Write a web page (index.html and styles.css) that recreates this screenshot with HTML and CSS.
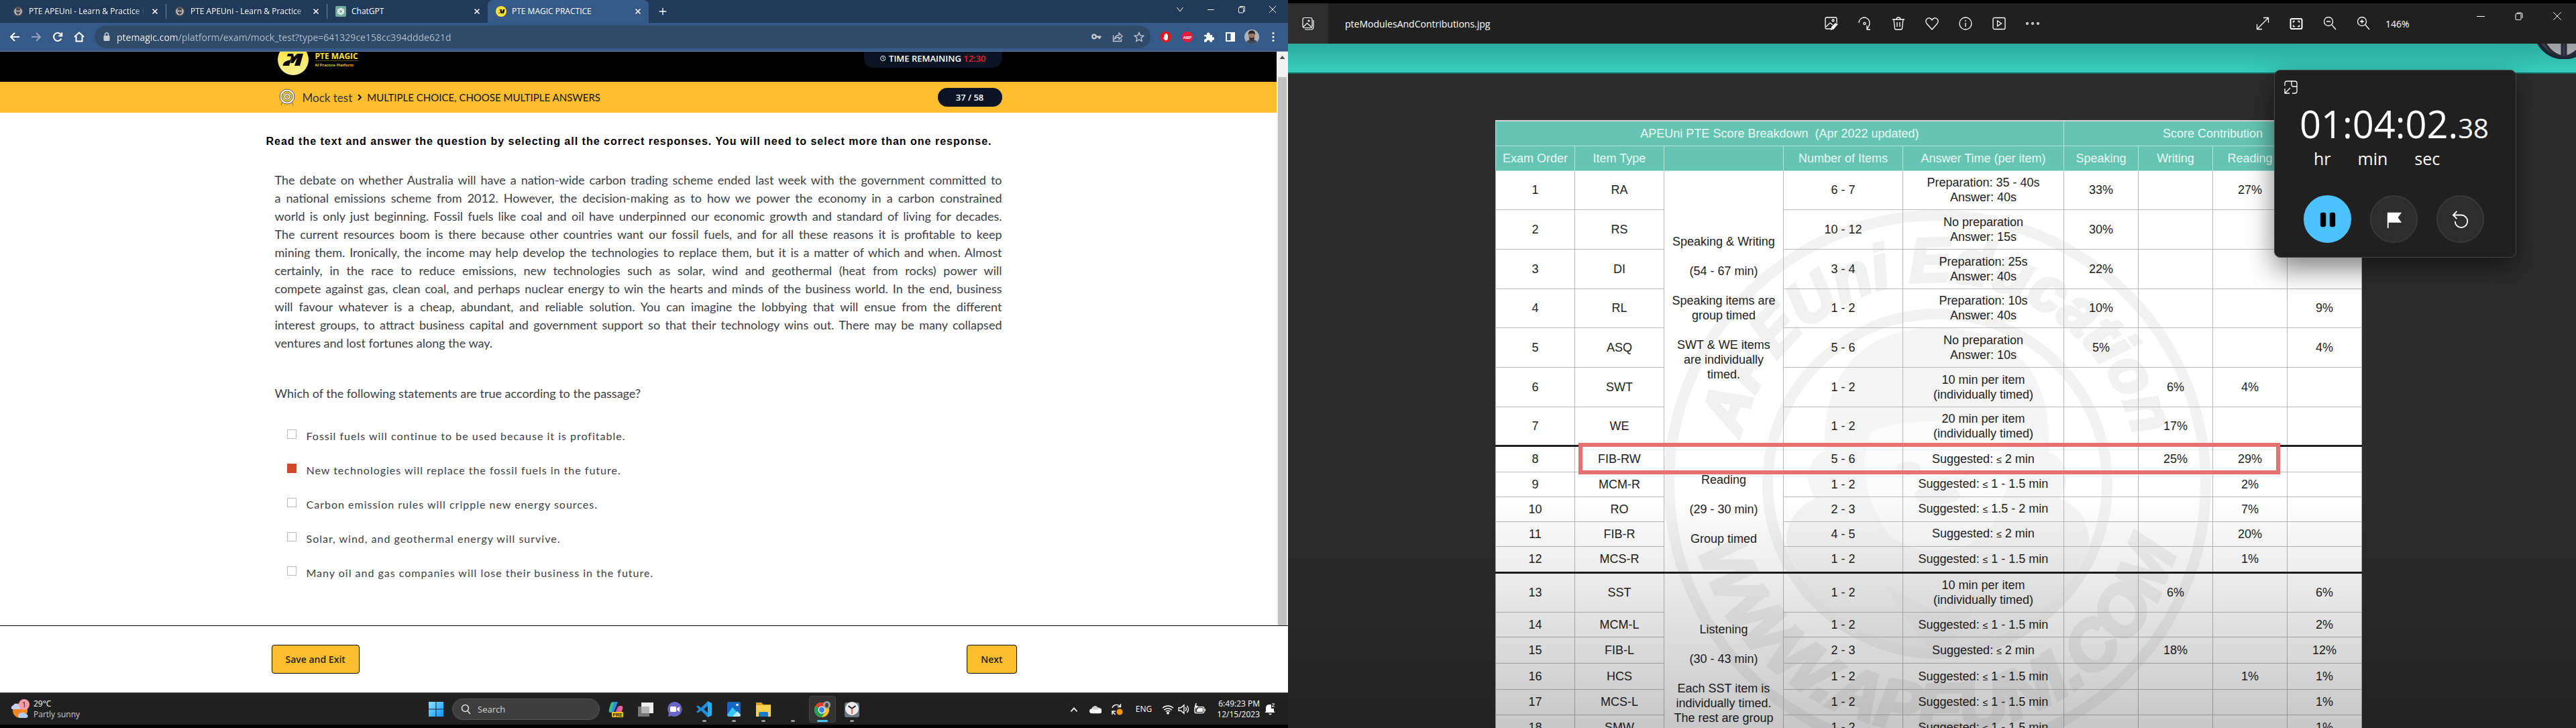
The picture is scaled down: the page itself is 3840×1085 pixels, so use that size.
FILE: index.html
```html
<!DOCTYPE html>
<html lang="en">
<head>
<meta charset="utf-8">
<title>PTE MAGIC PRACTICE</title>
<link rel="stylesheet" href="styles.css">
</head>
<body>
<div class="screen screen-left">
  <header class="tabs">
    <div class="tab">
      <svg class="fav" viewBox="0 0 16 16"><circle cx="8" cy="8" r="7.5" fill="#4a4a50"/><circle cx="8" cy="8" r="5.6" fill="#d5d5d5"/><path d="M4.5 6a3.500 3.500 0 0 1 7 0v4L8 13 4.500 10z" fill="#46464c"/><circle cx="6.500" cy="7.500" r="1" fill="#fff"/><circle cx="9.500" cy="7.500" r="1" fill="#fff"/></svg>
      <span class="tab-title fade">PTE APEUni - Learn &amp; Practice PTE</span>
      <button class="close" aria-label="Close tab"><svg viewBox="0 0 16 16"><path d="M4.500 4.500l7 7m0-7l-7 7"/></svg></button>
    </div>
    <div class="tab divided">
      <svg class="fav" viewBox="0 0 16 16"><circle cx="8" cy="8" r="7.5" fill="#4a4a50"/><circle cx="8" cy="8" r="5.6" fill="#d5d5d5"/><path d="M4.5 6a3.500 3.500 0 0 1 7 0v4L8 13 4.500 10z" fill="#46464c"/><circle cx="6.500" cy="7.500" r="1" fill="#fff"/><circle cx="9.500" cy="7.500" r="1" fill="#fff"/></svg>
      <span class="tab-title fade">PTE APEUni - Learn &amp; Practice PTE</span>
      <button class="close" aria-label="Close tab"><svg viewBox="0 0 16 16"><path d="M4.500 4.500l7 7m0-7l-7 7"/></svg></button>
    </div>
    <div class="tab divided">
      <svg class="fav" viewBox="0 0 16 16"><rect width="16" height="16" rx="2" fill="#74aa9c"/><g fill="none" stroke="#fff"><ellipse cx="8" cy="8" rx="2.400" ry="5"/><ellipse cx="8" cy="8" rx="2.400" ry="5" transform="rotate(60 8 8)"/><ellipse cx="8" cy="8" rx="2.400" ry="5" transform="rotate(120 8 8)"/></g></svg>
      <span class="tab-title">ChatGPT</span>
      <button class="close" aria-label="Close tab"><svg viewBox="0 0 16 16"><path d="M4.500 4.500l7 7m0-7l-7 7"/></svg></button>
    </div>
    <div class="tab active">
      <svg class="fav" viewBox="0 0 16 16"><circle cx="8" cy="8" r="8" fill="#ffe135"/><path d="M3 11l3-1 1-4-2 .5L6 5h3v4l2-4h2.500l-1.500 6h-2l1-3.500L9.500 11h-2L7 8l-1 3z" fill="#111"/></svg>
      <span class="tab-title">PTE MAGIC PRACTICE</span>
      <button class="close" aria-label="Close tab"><svg viewBox="0 0 16 16"><path d="M4.500 4.500l7 7m0-7l-7 7"/></svg></button>
    </div>
    <button class="new-tab" aria-label="New tab"><svg viewBox="0 0 16 16"><path d="M8 2v12M2 8h12"/></svg></button>
    <div class="win-controls">
      <button aria-label="Search tabs"><svg viewBox="0 0 12 12"><path d="M1.500 3L6 9l4.500-6"/></svg></button>
      <button aria-label="Minimize"><svg viewBox="0 0 12 12"><path d="M1 6.500h10"/></svg></button>
      <button aria-label="Restore"><svg viewBox="0 0 12 12"><rect x="1.500" y="3" width="7" height="8" rx="1"/><path d="M3.500 3V1.500H9A1.500 1.500 0 0 1 10.500 3v6H9"/></svg></button>
      <button aria-label="Close"><svg viewBox="0 0 12 12"><path d="M1 1l10 10M11 1L1 11"/></svg></button>
    </div>
  </header>
  <nav class="toolbar">
    <button aria-label="Back"><svg viewBox="0 0 16 16"><path d="M15 8H2m6-6L2 8l6 6"/></svg></button>
    <button class="dim" aria-label="Forward"><svg viewBox="0 0 16 16"><path d="M1 8h13M8 2l6 6-6 6"/></svg></button>
    <button aria-label="Reload"><svg viewBox="0 0 16 16"><path d="M13.500 10.500A6 6 0 1 1 13 4.500L14 6M14.200 1.500v5h-5"/></svg></button>
    <button aria-label="Home"><svg viewBox="0 0 16 16"><path d="M1 8l7-6.500L15 8M3.500 7v7.500h9V7"/></svg></button>
    <div class="address">
      <svg class="lock" viewBox="0 0 12 14"><rect x="1.500" y="5" width="9" height="8" rx="1" fill="#c5ccd6"/><path d="M3.500 5V3.500a2.500 2.500 0 0 1 5 0V5" fill="none" stroke="#c5ccd6" stroke-width="1.500"/></svg>
      <input class="url" type="text" aria-label="Address" value="ptemagic.com/platform/exam/mock_test?type=641329ce158cc394ddde621d">
      <svg class="in-icon" viewBox="0 0 16 16"><circle cx="5" cy="7.500" r="2.800" fill="none" stroke="#c5ccd6" stroke-width="2.200"/><path d="M8 6.500h7.500V9h-1.500v2h-2.500V9H8z" fill="#c5ccd6"/></svg>
      <svg class="in-icon" viewBox="0 0 16 16" fill="none" stroke="#c5ccd6" stroke-width="1.300"><path d="M1.500 5.500v9h12v-4"/><path d="M3.500 11c1-4 3.500-5.500 6.500-5.500V2l5 5-5 4.500V8.500C7.500 8.500 5.500 9 3.500 11z"/></svg>
      <svg class="in-icon" viewBox="0 0 16 16" fill="none" stroke="#c5ccd6" stroke-width="1.300"><path d="M8 1.500l1.900 4.500 4.800.4-3.700 3.200 1.200 4.800L8 11.900l-4.200 2.500L5 9.600 1.300 6.400l4.800-.4z"/></svg>
    </div>
    <div class="extensions">
      <svg viewBox="0 0 16 16"><path d="M5 0h6l5 5v6l-5 5H5l-5-5V5z" fill="#e8131a"/><path d="M5 9V5.500a.8.8 0 0 1 1.500 0V3.800a.8.800 0 0 1 1.500 0v-.6a.8.800 0 0 1 1.500 0V5a.8.800 0 0 1 1.500 0v5c0 2-1.200 3-3 3-2 0-2.500-1.500-4-4z" fill="#fff"/></svg>
      <svg viewBox="0 0 16 16"><path d="M5 0h6l5 5v6l-5 5H5l-5-5V5z" fill="#ee1c3c"/><text x="8" y="10.500" text-anchor="middle" class="abp">ABP</text></svg>
      <svg viewBox="0 0 16 16"><path d="M1 5h4a2.500 2.500 0 1 1 4.600 0H13v3.300a2.400 2.400 0 1 1 0 4.500V15.500H9.500a2.300 2.300 0 1 0-4.500 0H1V11.500a2.300 2.300 0 1 0 0-4.200z" fill="#fff"/></svg>
      <svg viewBox="0 0 16 16"><path d="M1 1h14v14H1zM3 3v10h5.500V3z" fill="#fff" fill-rule="evenodd"/></svg>
      <svg class="avatar" viewBox="0 0 22 22"><circle cx="11" cy="11" r="11" fill="#a9b3ba"/><path d="M3 18.500c2-3 5-4 8-4s6 1 8 4A11 11 0 0 1 3 18.500z" fill="#3f4a5e"/><ellipse cx="11" cy="9.500" rx="4.500" ry="6" fill="#9b7656"/><path d="M6 8.500C5.500 3 8 1.500 11 1.500s5.500 1.500 5 7L14.500 6h-7z" fill="#272425"/><path d="M7 11c1 2 7 2 8 0 0 4-2 6-4 6s-4-2-4-6z" fill="#3c2f28"/></svg>
      <svg viewBox="0 0 16 16" fill="#fff"><circle cx="8" cy="2.500" r="1.600"/><circle cx="8" cy="8" r="1.600"/><circle cx="8" cy="13.500" r="1.600"/></svg>
    </div>
  </nav>

  <div class="site">
    <div class="page">
      <div class="brandbar"><div class="inner">
        <svg class="logo" viewBox="0 0 48 36"><defs><linearGradient id="lg" x2="0" y2="1"><stop offset="0" stop-color="#ffe02e"/><stop offset="1" stop-color="#faf09a"/></linearGradient></defs><circle cx="24" cy="12" r="23" fill="url(#lg)"/><path d="M16 3h8l1 5 5-5h9l-5 18h-8l4-12-6 8-4 0 2-8-4 12h-9c-1 0 0-7 8-8l3-1 1-5h-6z" fill="#0a0a0a"/></svg>
        <div class="brand"><b>PTE MAGIC</b><span>AI Practice Platform</span></div>
        <div class="pill timer"><svg viewBox="0 0 14 14" fill="none" stroke="#fff" stroke-width="1.500"><circle cx="7" cy="7" r="6"/><path d="M7 3v4.500l2.500 1.500"/></svg>TIME REMAINING <em>12:30</em></div>
      </div></div>
      <div class="crumbs"><div class="inner">
        <svg class="target" viewBox="0 0 24 26"><path d="M5 20l-2 5M19 20l2 5" stroke="#666"/><circle cx="12" cy="12" r="11" fill="#fff" stroke="#555"/><circle cx="12" cy="12" r="8" fill="#ffcf20" stroke="#555"/><circle cx="12" cy="12" r="5" fill="#fff" stroke="#555"/><circle cx="12" cy="12" r="2.300" fill="#ffcf20" stroke="#555"/></svg>
        <a href="#mock">Mock test</a>
        <svg class="arrow" viewBox="0 0 8 12"><path d="M2 2l4 4-4 4" fill="none" stroke="#111" stroke-width="2"/></svg>
        <span>MULTIPLE CHOICE, CHOOSE MULTIPLE ANSWERS</span>
        <div class="pill count">37 / 58</div>
      </div></div>
      <main>
        <h1>Read the text and answer the question by selecting all the correct responses. You will need to select more than one response.</h1>
        <div class="question">
          <div class="passage">
            <p>The debate on whether Australia will have a nation-wide carbon trading scheme ended last week with the government committed to<br>a national emissions scheme from 2012. However, the decision-making as to how we power the economy in a carbon constrained<br>world is only just beginning. Fossil fuels like coal and oil have underpinned our economic growth and standard of living for decades.<br>The current resources boom is there because other countries want our fossil fuels, and for all these reasons it is profitable to keep<br>mining them. Ironically, the income may help develop the technologies to replace them, but it is a matter of which and when. Almost<br>certainly, in the race to reduce emissions, new technologies such as solar, wind and geothermal (heat from rocks) power will<br>compete against gas, clean coal, and perhaps nuclear energy to win the hearts and minds of the business world. In the end, business<br>will favour whatever is a cheap, abundant, and reliable solution. You can imagine the lobbying that will ensue from the different<br>interest groups, to attract business capital and government support so that their technology wins out. There may be many collapsed</p>
            <p class="last">ventures and lost fortunes along the way.</p>
          </div>
          <p class="prompt">Which of the following statements are true according to the passage?</p>
          <div class="options">
            <label><input type="checkbox"><span>Fossil fuels will continue to be used because it is profitable.</span></label>
            <label><input type="checkbox" checked><span>New technologies will replace the fossil fuels in the future.</span></label>
            <label><input type="checkbox"><span>Carbon emission rules will cripple new energy sources.</span></label>
            <label><input type="checkbox"><span>Solar, wind, and geothermal energy will survive.</span></label>
            <label><input type="checkbox"><span>Many oil and gas companies will lose their business in the future.</span></label>
          </div>
        </div>
      </main>
    </div>
    <div class="scrollbar"><svg viewBox="0 0 17 17"><path d="M8.500 6l4 5h-8z" fill="#505050"/></svg><i></i></div>
  </div>
  <footer class="actions"><div>
    <button>Save and Exit</button><button>Next</button>
  </div></footer>

  <div class="taskbar">
    <div class="weather">
      <svg viewBox="0 0 32 30"><circle cx="15" cy="17" r="11" fill="#f0861c"/><path d="M2 14a4 4 0 0 1 3-5 5 5 0 0 1 9 1 3 3 0 0 1 1 5H3z" fill="#c3d3f5"/><path d="M12 26a4 4 0 0 1 3-5 5 5 0 0 1 8 1 3 3 0 0 1 1 6H14z" fill="#b4cdf3"/><circle cx="21" cy="8" r="8" fill="#ff99a4"/><text x="21" y="12" text-anchor="middle" class="badge">1</text></svg>
      <div>29°C<span>Partly sunny</span></div>
    </div>
    <div class="apps">
      <button aria-label="Start"><svg viewBox="0 0 24 24"><defs><linearGradient id="wg" x2="1" y2="1"><stop offset="0" stop-color="#8be4ff"/><stop offset="1" stop-color="#0a94ff"/></linearGradient></defs><path d="M1 1h10.500v10.500H1zM12.500 1H23v10.500H12.500zM1 12.500h10.500V23H1zM12.500 12.500H23V23H12.500z" fill="url(#wg)"/></svg></button>
      <label class="search"><svg viewBox="0 0 16 16" fill="none" stroke="#ddd" stroke-width="1.600"><circle cx="7.500" cy="6.500" r="5"/><path d="M11 10.500l4 4.500"/></svg><input type="text" placeholder="Search" aria-label="Search"></label>
      <button aria-label="Copilot"><svg viewBox="0 0 24 24"><path d="M3 17L7 4q1-3 4-3h4l-5 13q-1 3-4 3z" fill="#2b8fe0"/><path d="M3 17q-2-1-1-5l2-7q1-4 5-4L6 15z" fill="#35c28c"/><path d="M21 7L17 20q-1 2-4 2H9l5-12q1-3 4-3z" fill="#c558c8"/><path d="M21 7q2 1 1 5l-3 8-6 2 5-15z" fill="#f2628d"/><rect x="6" y="16" width="17" height="8" rx="1" fill="#ffc61a"/><text x="14.500" y="22.500" text-anchor="middle" class="pre">PRE</text></svg></button>
      <button aria-label="Task view"><svg viewBox="0 0 24 24"><rect x="1" y="8" width="17" height="15" fill="#777"/><rect x="6" y="2" width="18" height="16" fill="#eee"/><rect x="6" y="8" width="12" height="10" fill="#b5b5b5"/></svg></button>
      <button aria-label="Chat"><svg viewBox="0 0 24 24"><path d="M12 1a11 11 0 1 1-5 21l-5 1 1-5A11 11 0 0 1 12 1z" fill="#6a67c8"/><rect x="5" y="8" width="9" height="8" rx="1.500" fill="#fff"/><path d="M15 11l4-3v8l-4-3z" fill="#fff"/></svg></button>
      <button aria-label="Code" class="run"><svg viewBox="0 0 24 24"><path d="M17 0l6 3v18l-6 3L7 14l-4.500 3.500L0 16l4-4-4-4 2.500-1.500L7 10zM17 7l-6 5 6 5z" fill="#1d8fdc" fill-rule="evenodd"/><path d="M17 0l6 3v18l-6 3z" fill="#33a9f2"/></svg></button>
      <button aria-label="Photos" class="run"><svg viewBox="0 0 24 24"><rect x="2" y="1" width="20" height="22" rx="3" fill="#1566c0"/><path d="M2 20l8-11 12 14H4q-2-1-2-3z" fill="#36c6f4"/><path d="M10 23l7-8 5 5v1q-1 2-3 2z" fill="#b7ecff"/><circle cx="17" cy="5.500" r="1.800" fill="#fff"/></svg></button>
      <button aria-label="Files" class="run"><svg viewBox="0 0 24 24"><path d="M1 2h8l3 3h11v18H1z" fill="#e4a11b"/><path d="M1 6h22v17H1z" fill="#ffd14d"/><path d="M5 23v-5q0-2 2-2h10q2 0 2 2v5z" fill="#1d79c9"/></svg></button>
      <button aria-label="App" class="run"></button>
      <button aria-label="Chrome" class="current"><svg viewBox="0 0 24 24"><circle cx="11" cy="13" r="11" fill="#fbc116"/><path d="M11 13L1.500 7.500A11 11 0 0 1 20.500 7.500z" fill="#e33b2e"/><path d="M11 13L1.500 7.500A11 11 0 0 0 11 24l5-8z" fill="#1fa055"/><circle cx="11" cy="13" r="5.500" fill="#fff"/><circle cx="11" cy="13" r="4.200" fill="#3b7ff0"/><circle cx="18.500" cy="5.500" r="5.500" fill="#9aa3aa"/><ellipse cx="18.500" cy="6" rx="2.500" ry="3.500" fill="#5a4335"/></svg></button>
      <button aria-label="Clock" class="run"><svg viewBox="0 0 24 24"><rect x="1" y="2" width="22" height="22" rx="3" fill="#6b7780"/><circle cx="12" cy="11" r="10" fill="#e9eaec"/><path d="M12 11L6.500 7M12 11l5.500-4" stroke="#222" stroke-width="2"/><path d="M12 11v8" stroke="#d1451b" stroke-width="1.500"/></svg></button>
    </div>
    <div class="tray">
      <svg class="w32" viewBox="0 0 16 16"><path d="M4 11l4-4.500 4 4.500" fill="none" stroke="#eee" stroke-width="1.600"/></svg>
      <svg class="w32" viewBox="0 0 16 16"><path d="M1 10a3 3 0 0 1 2-3 4.500 4.500 0 0 1 8-1.500A4 4 0 0 1 15 9z" fill="#cfcfcf"/><path d="M3 13.500a3 3 0 0 1 0-6l6 1.500 4-2a3 3 0 0 1 1 6.500z" fill="#fff"/></svg>
      <svg class="w32" viewBox="0 0 18 18"><path d="M2 7a7 7 0 0 1 12-2M14.500 1v4.500H10M2 17v-5h5M2.500 13l4 4" fill="none" stroke="#fff" stroke-width="1.400"/><circle cx="13" cy="13" r="4.500" fill="#ff9500"/></svg>
      <span class="lang">ENG</span>
      <svg class="w24" viewBox="0 0 16 16" fill="none" stroke="#fff" stroke-width="1.300"><path d="M1 6.500a10 10 0 0 1 14 0M3 9a7 7 0 0 1 10 0M5.200 11.200a4 4 0 0 1 5.600 0"/><circle cx="8" cy="13" r="1" fill="#fff"/></svg>
      <svg class="w24" viewBox="0 0 16 16" fill="none" stroke="#fff" stroke-width="1.200"><path d="M1 6v4h3l4 3.500v-11L4 6zM10 5.500q2 2.500 0 5M12 3.500q3.500 4.500 0 9"/></svg>
      <svg class="w24" viewBox="0 0 16 16" fill="none" stroke="#fff" stroke-width="1.300"><rect x="1" y="5" width="12" height="8" rx="1.500"/><path d="M14.500 7.500v3M6 7h5v4H4V9z" fill="#fff"/><path d="M3 0L1.500 4H4L2.500 7"/></svg>
      <div class="time">6:49:23 PM<span>12/15/2023</span></div>
      <svg class="bell" viewBox="0 0 18 18"><path d="M3 12V7a5 5 0 0 1 6-5h2v6h4v4l1.500 2h-15zM7 15.500h5q-1 2-2.500 2T7 15.500z" fill="#fff"/><path d="M12 1h4l-4 4h4M8 6h3l-3 4h3" fill="none" stroke="#fff"/></svg>
    </div>
  </div>
</div>

<div class="screen screen-right">
  <header class="viewer-bar">
    <div class="file">
      <button aria-label="All photos"><svg viewBox="0 0 18 20" fill="none" stroke="#fff" stroke-width="1.200"><rect x="1" y="1.500" width="14" height="15" rx="2.500"/><path d="M4 19h9q4 0 4-4V5M2 15l5.500-5.500L13.500 15"/><circle cx="10" cy="6" r="1"/></svg></button>
      <span>pteModulesAndContributions.jpg</span>
    </div>
    <div class="tools">
      <button aria-label="Edit"><svg viewBox="0 0 20 20"><path d="M10 18H3q-2 0-2-2V3q0-2 2-2h13q2 0 2 2v6M2 15l6-6 4 3"/><circle cx="12.500" cy="5.500" r="1.500"/><path d="M11 15l5-5 3 1-6 7-3 1z" fill="#fff"/></svg></button>
      <button aria-label="Rotate"><svg viewBox="0 0 20 20"><path d="M1 9a8 8 0 0 1 16 0q0 5-4 9m0-5v6h5"/><circle cx="9.500" cy="10" r="1.600"/></svg></button>
      <button aria-label="Delete"><svg viewBox="0 0 20 20"><path d="M1 4h18M7 4q0-3 3-3t3 3M3 4l1.500 13q0 2 2 2h7q2 0 2-2L17 4M8 8v7M12 8v7"/></svg></button>
      <button aria-label="Favorite"><svg viewBox="0 0 20 20"><path d="M10 19L2 10q-2.500-4 .5-7Q7 0 10 5q3-5 7.500-2 3 3 .5 7z"/></svg></button>
      <button aria-label="Info"><svg viewBox="0 0 20 20"><circle cx="10" cy="10" r="9"/><path d="M10 9v6M10 5v2"/></svg></button>
      <button aria-label="Slideshow"><svg viewBox="0 0 20 20"><rect x="1" y="1.500" width="18" height="17" rx="2"/><path d="M7.500 6v8l6-4z"/></svg></button>
      <button aria-label="More"><svg viewBox="0 0 20 20" fill="#fff"><circle cx="2" cy="10" r="1.300"/><circle cx="10" cy="10" r="1.300"/><circle cx="18" cy="10" r="1.300"/></svg></button>
    </div>
    <div class="right">
      <div class="tools">
        <button aria-label="Full screen"><svg viewBox="0 0 20 20"><path d="M2 18L18 2M11 1.500h7.500V9M1.500 11v7.500H9"/></svg></button>
        <button aria-label="Fit"><svg viewBox="0 0 20 20"><rect x="1.500" y="3" width="17" height="15" rx="2" stroke-width="2"/><path d="M5.500 9V6.500H8M12 6.500h2.500V9M14.500 12v2.500H12M8 14.500H5.500V12"/></svg></button>
        <button aria-label="Zoom out"><svg viewBox="0 0 20 20"><circle cx="8" cy="7" r="6.500"/><path d="M5 7h6M13 12l6 7"/></svg></button>
        <button aria-label="Zoom in"><svg viewBox="0 0 20 20"><circle cx="8" cy="7" r="6.500"/><path d="M5 7h6M8 4v6M13 12l6 7"/></svg></button>
        <span>146%</span>
      </div>
      <div class="win">
        <button aria-label="Minimize"><svg viewBox="0 0 12 12"><path d="M0 6.500h12"/></svg></button>
        <button aria-label="Restore"><svg viewBox="0 0 12 12"><rect x="1" y="2.500" width="8" height="9" rx="1"/><path d="M3 1h6q2 0 2 2v6"/></svg></button>
        <button aria-label="Close"><svg viewBox="0 0 12 12"><path d="M0 0l12 12M12 0L0 12"/></svg></button>
      </div>
    </div>
  </header>
  <section class="photo">
    <div class="banner"><svg viewBox="0 0 90 90"><circle cx="45" cy="45" r="43" fill="#41454f" stroke="#1c2b3a" stroke-width="5"/><path d="M14 60q12-1 28 6v20Q24 82 14 60zM76 60q-12-1-28 6v20q18-4 28-26z" fill="#b9bcc2" stroke="#2a313d" stroke-width="3"/><path d="M15 48q30 14 60 0v-6H15z" fill="#23262f"/></svg></div>
    <div class="sheet">
      <svg class="watermark" viewBox="0 0 816 816" aria-hidden="true">
        <defs><path id="arcTop" d="M106 408A302 302 0 0 1 710 408"/><path id="arcBottom" d="M39 408A369 369 0 0 0 777 408"/></defs>
        <circle cx="408" cy="408" r="400" fill="none" stroke="#f2f2f2" stroke-width="16"/>
        <circle cx="408" cy="408" r="253" fill="none" stroke="#f2f2f2" stroke-width="16"/>
        <path d="M240 360C235 230 310 175 408 175S580 230 574 360C600 370 610 400 590 430C640 450 640 500 625 520A243 243 0 0 1 191 520C176 500 180 450 226 430C206 400 216 370 240 360z" fill="#f5f5f5"/>
        <path d="M310 330C350 310 460 310 506 330C530 380 510 420 490 470C460 520 350 520 326 470C300 420 290 380 310 330z" fill="#fbfbfb"/>
        <g fill="#f1f1f1"><ellipse cx="365" cy="385" rx="18" ry="10"/><ellipse cx="451" cy="385" rx="18" ry="10"/><ellipse cx="408" cy="425" rx="34" ry="14"/><path d="M330 560l60 90h36l60-90-78 40z"/></g>
        <text class="seal-top"><textPath href="#arcTop" startOffset="50%">APEUni Education</textPath></text>
        <text class="seal-bottom"><textPath href="#arcBottom" startOffset="50%">WWW.APEUNI.COM</textPath></text>
      </svg>
      <table>
        <colgroup><col class="c1"><col class="c2"><col class="c3"><col class="c3"><col class="c5"><col class="c6"><col class="c6"><col class="c6"><col class="c6"></colgroup>
        <thead>
          <tr><th colspan="5">APEUni PTE Score Breakdown &nbsp;(Apr 2022 updated)</th><th colspan="4">Score Contribution</th></tr>
          <tr><th>Exam Order</th><th>Item Type</th><th></th><th>Number of Items</th><th>Answer Time (per item)</th><th>Speaking</th><th>Writing</th><th>Reading</th><th></th></tr>
        </thead>
        <tbody class="speaking">
          <tr><td>1</td><td>RA</td><td rowspan="7">Speaking &amp; Writing<br><br>(54 - 67 min)<br><br>Speaking items are<br>group timed<br><br>SWT &amp; WE items<br>are individually<br>timed.</td><td>6 - 7</td><td>Preparation: 35 - 40s<br>Answer: 40s</td><td>33%</td><td></td><td>27%</td><td></td></tr>
          <tr><td>2</td><td>RS</td><td>10 - 12</td><td>No preparation<br>Answer: 15s</td><td>30%</td><td></td><td></td><td></td></tr>
          <tr><td>3</td><td>DI</td><td>3 - 4</td><td>Preparation: 25s<br>Answer: 40s</td><td>22%</td><td></td><td></td><td></td></tr>
          <tr><td>4</td><td>RL</td><td>1 - 2</td><td>Preparation: 10s<br>Answer: 40s</td><td>10%</td><td></td><td></td><td>9%</td></tr>
          <tr><td>5</td><td>ASQ</td><td>5 - 6</td><td>No preparation<br>Answer: 10s</td><td>5%</td><td></td><td></td><td>4%</td></tr>
          <tr><td>6</td><td>SWT</td><td>1 - 2</td><td>10 min per item<br>(individually timed)</td><td></td><td>6%</td><td>4%</td><td></td></tr>
          <tr><td>7</td><td>WE</td><td>1 - 2</td><td>20 min per item<br>(individually timed)</td><td></td><td>17%</td><td></td><td></td></tr>
        </tbody>
        <tbody class="reading">
          <tr><td>8</td><td>FIB-RW</td><td rowspan="5">Reading<br><br>(29 - 30 min)<br><br>Group timed</td><td>5 - 6</td><td>Suggested: <small>≤</small> 2 min</td><td></td><td>25%</td><td>29%</td><td></td></tr>
          <tr><td>9</td><td>MCM-R</td><td>1 - 2</td><td>Suggested: <small>≤</small> 1 - 1.5 min</td><td></td><td></td><td>2%</td><td></td></tr>
          <tr><td>10</td><td>RO</td><td>2 - 3</td><td>Suggested: <small>≤</small> 1.5 - 2 min</td><td></td><td></td><td>7%</td><td></td></tr>
          <tr><td>11</td><td>FIB-R</td><td>4 - 5</td><td>Suggested: <small>≤</small> 2 min</td><td></td><td></td><td>20%</td><td></td></tr>
          <tr><td>12</td><td>MCS-R</td><td>1 - 2</td><td>Suggested: <small>≤</small> 1 - 1.5 min</td><td></td><td></td><td>1%</td><td></td></tr>
        </tbody>
        <tbody class="listening">
          <tr><td>13</td><td>SST</td><td rowspan="6" class="note">Listening<br><br>(30 - 43 min)<br><br>Each SST item is<br>individually timed.<br>The rest are group<br>timed.</td><td>1 - 2</td><td>10 min per item<br>(individually timed)</td><td></td><td>6%</td><td></td><td>6%</td></tr>
          <tr><td>14</td><td>MCM-L</td><td>1 - 2</td><td>Suggested: <small>≤</small> 1 - 1.5 min</td><td></td><td></td><td></td><td>2%</td></tr>
          <tr><td>15</td><td>FIB-L</td><td>2 - 3</td><td>Suggested: <small>≤</small> 2 min</td><td></td><td>18%</td><td></td><td>12%</td></tr>
          <tr><td>16</td><td>HCS</td><td>1 - 2</td><td>Suggested: <small>≤</small> 1 - 1.5 min</td><td></td><td></td><td>1%</td><td>1%</td></tr>
          <tr><td>17</td><td>MCS-L</td><td>1 - 2</td><td>Suggested: <small>≤</small> 1 - 1.5 min</td><td></td><td></td><td></td><td>1%</td></tr>
          <tr><td>18</td><td>SMW</td><td>1 - 2</td><td>Suggested: <small>≤</small> 1 - 1.5 min</td><td></td><td></td><td></td><td>1%</td></tr>
        </tbody>
      </table>
      <div class="marker"></div>
    </div>
  </section>
  <aside class="stopwatch">
    <svg class="pin" viewBox="0 0 20 20" fill="none" stroke="#fff" stroke-width="1.300"><path d="M1 8V4q0-3 3-3h12q3 0 3 3v12q0 3-3 3h-4M11 1v5q0 3 3 3h5M1 12v7h7M1.500 18.500L9 11"/></svg>
    <div class="digits">01:04:02.<small>38</small></div>
    <div class="units"><span>hr</span><span>min</span><span>sec</span></div>
    <div class="round">
      <button class="pause" aria-label="Pause"><svg viewBox="0 0 28 28"><rect x="2" y="3" width="9" height="23" rx="3"/><rect x="17" y="3" width="9" height="23" rx="3"/></svg></button>
      <button aria-label="Lap"><svg viewBox="0 0 28 28"><path d="M3 28V3h23l-6 8 6 8H5v9z" fill="#fff"/></svg></button>
      <button aria-label="Reset"><svg viewBox="0 0 28 28" fill="none" stroke="#fff" stroke-width="2"><path d="M8 1L2 7l6 6M3 7h12a10 10 0 1 1-10 10"/></svg></button>
    </div>
  </aside>
</div>
</body>
</html>
```
FILE: styles.css
```css
* { box-sizing: border-box; }
body {
  margin: 0;
  display: flex;
  height: 100vh;
  overflow: hidden;
  background: #000;
  font-family: "Open Sans", "Noto Sans", sans-serif;
  font-size: 12px;
  color: #fff;
}
button { margin: 0; padding: 0; border: 0; background: none; color: inherit; font: inherit; }
p, h1 { margin: 0; }
.screen { position: relative; flex: 1 1 0; min-width: 0; display: flex; flex-direction: column; }
.screen-left { padding-bottom: 5px; }
.screen-right { padding-top: 5px; }

/* Browser tabs */
.tabs { display: flex; flex: none; height: 34px; padding-left: 7px; background: #223a5a; }
.tab { display: flex; align-items: center; gap: 8px; width: 240px; padding: 0 8px 0 12px; }
.tab.divided { border-style: solid; border-image: linear-gradient(#223a5a 20%, #7187a0 20% 80%, #223a5a 80%) 1; border-width: 0 0 0 1px; }
.tab.active { background: #355a87; border-radius: 8px 8px 0 0; }
.fav { flex: none; width: 16px; height: 16px; }
.tab-title { flex: 1; overflow: hidden; white-space: nowrap; line-height: 16px; }
.tab-title.fade { -webkit-mask-image: linear-gradient(90deg, #000 92%, transparent); mask-image: linear-gradient(90deg, #000 92%, transparent); }
.close { display: flex; }
.close svg, .new-tab svg { width: 16px; height: 16px; fill: none; stroke: #fff; stroke-width: 1.500px; }
.new-tab { display: flex; align-items: center; margin-left: 14px; }
.new-tab svg { width: 14px; height: 14px; }
.win-controls { display: flex; height: 28px; margin-left: auto; }
.win-controls button { display: flex; align-items: center; justify-content: center; width: 46px; }
.win-controls svg, .win svg { width: 12px; height: 12px; fill: none; stroke: #fff; stroke-width: 1px; }

/* Browser toolbar */
.toolbar { display: flex; align-items: center; flex: none; height: 43px; padding: 0 6px; background: #355a87; border-bottom: 1px solid #5f81a8; }
.toolbar > button { display: flex; align-items: center; justify-content: center; width: 32px; }
.toolbar > button svg { width: 16px; height: 16px; fill: none; stroke: #fff; stroke-width: 2px; }
.toolbar > .dim { opacity: .45; }
.address { display: flex; align-items: center; flex: 1; height: 34px; margin: 0 7px; padding: 0 9px 0 12px; border-radius: 17px; background: #304a69; }
.lock { width: 12px; height: 14px; }
.url {
  flex: 1; min-width: 0; margin-left: 9px; padding: 0; border: 0; outline: 0; font: 14px "Open Sans", sans-serif;
  color: transparent; background: linear-gradient(90deg, #fff 90px, #b3c0cf 90px); -webkit-background-clip: text; background-clip: text;
}
.in-icon { width: 16px; height: 16px; margin-left: 16px; }
.extensions { display: flex; align-items: center; }
.extensions svg { width: 16px; height: 16px; margin: 0 8px; }
.extensions .avatar { width: 22px; height: 22px; margin: 0 5px; }
.abp { font: bold 6px "Liberation Sans", sans-serif; fill: #fff; }

/* Exam site */
.site { display: flex; flex: 1; min-height: 0; color: #3d4045; background: #fff; }
.page { flex: 1; min-width: 0; font-family: Lato, sans-serif; }
.inner { display: flex; align-items: center; max-width: 1084px; height: 100%; margin: 0 auto; }
.brandbar { height: 45px; background: #000; }
.brandbar .inner { align-items: flex-start; }
.logo { width: 48px; height: 36px; margin-left: 3px; }
.brand { display: flex; flex-direction: column; margin-left: 9px; color: #ffe135; font: 12px "Open Sans", sans-serif; }
.brand b { line-height: 13px; border-bottom: 1px solid #5a5118; }
.brand span { font-size: 6px; font-weight: 600; line-height: 13px; }
.pill { display: flex; align-items: center; margin-left: auto; background: #0b1424; color: #fff; font: 600 13px "Open Sans", sans-serif; }
.timer { height: 24px; width: 206px; padding: 0 24px 5px; border-radius: 0 0 14px 14px; white-space: pre; }
.timer svg { width: 14px; height: 14px; margin-right: 5px; }
.timer em { font-style: normal; color: #e5242c; }
.count { height: 28px; width: 96px; justify-content: center; border-radius: 14px; }
.crumbs { height: 46px; background: #ffbe2e; color: #111; font-size: 15px; }
.crumbs a { color: #33363a; text-decoration: none; font-size: 17px; }
.target { width: 24px; height: 26px; margin: 0 11px 0 6px; }
.arrow { width: 8px; height: 12px; margin: 0 7px; }

main { max-width: 1110px; margin: 0 auto; padding-top: 31px; }
h1 { font: bold 16px/24px "Liberation Sans", sans-serif; letter-spacing: 1px; color: #000; white-space: nowrap; }
.question { padding: 32px 13px 0; }
.passage { font-size: 18px; line-height: 27px; text-align: justify; text-align-last: justify; }
.passage .last { text-align-last: left; }
.prompt { margin-top: 48px; font-size: 18px; line-height: 27px; }
.options { display: flex; flex-direction: column; gap: 27px; padding: 38px 18px 0; }
.options label { display: flex; gap: 15px; font-size: 16px; line-height: 24px; letter-spacing: 1px; }
.options input { appearance: none; width: 14px; height: 14px; margin: 2px 0 0; border: 1px solid #bbb; background: #fff; }
.options input:checked { background: #d2492a; border-color: #d2492a; }

.scrollbar { width: 17px; background: #f1f1f1; display: flex; flex-direction: column; align-items: center; }
.scrollbar svg { width: 17px; height: 17px; margin-bottom: 21px; }
.scrollbar i { flex: 1; width: 13px; background: #c1c1c1; }

.actions { flex: none; height: 100px; padding-top: 28px; border-top: 1px solid #000; background: #fff; }
.actions div { display: flex; justify-content: space-between; max-width: 1111px; margin: 0 auto; }
.actions button { height: 43px; padding: 0 20px; border: 1px solid #000; border-radius: 4px; background: #ffbe2e; color: #222; font: 600 14px "Open Sans", sans-serif; }

/* Taskbar */
.taskbar { display: grid; grid-template-columns: 1fr auto 1fr; align-items: center; flex: none; height: 48px; background: #202020; border-top: 1px solid #4a4a4a; }
.weather { display: flex; align-items: center; gap: 3px; padding-left: 15px; line-height: 16px; }
.weather svg { flex: none; width: 32px; height: 30px; }
.weather span, .time span { display: block; color: #ccc; }
.badge { font: 11px "Open Sans", sans-serif; fill: #222; }
.apps { display: flex; align-items: center; }
.apps button { position: relative; display: flex; align-items: center; justify-content: center; width: 44px; height: 46px; }
.apps button svg { width: 24px; height: 24px; }
.apps .run::after, .apps .current::after { content: ""; position: absolute; bottom: 4px; left: 19px; width: 6px; height: 3px; border-radius: 2px; background: #9a9a9a; }
.apps .current::before { content: ""; position: absolute; inset: 3px 2px; border: 1px solid #434343; border-radius: 4px; background: #343434; }
.apps .current svg { position: relative; }
.apps .current::after { left: 14px; width: 16px; background: #4cc2ff; }
.pre { font: bold 7px "Liberation Sans", sans-serif; fill: #222; }
.search { display: flex; align-items: center; gap: 10px; width: 220px; height: 32px; margin: 0 2px; padding: 0 11px; border: 1px solid #555; border-radius: 16px; background: #3e3e3e; }
.search svg { width: 16px; height: 16px; }
.search input { flex: 1; min-width: 0; padding: 0; border: 0; outline: 0; background: none; font: 13px "Open Sans", sans-serif; }
.search input::placeholder { color: #d5d5d5; opacity: 1; }
.tray { display: flex; align-items: center; justify-content: flex-end; padding-right: 18px; line-height: 16px; }
.w32 { width: 18px; height: 18px; margin: 0 7px; }
.w24 { width: 18px; height: 18px; margin: 0 3px; }
.lang { margin: 0 12px; }
.time { margin-left: 13px; text-align: right; }
.time span { color: #fff; }
.bell { width: 18px; height: 18px; margin-left: 6px; }

/* Photo viewer */
.viewer-bar { display: grid; grid-template-columns: 1fr auto 1fr; flex: none; height: 60px; background: #202020; font-size: 14px; }
.file, .tools, .right, .win { display: flex; align-items: center; }
.file button { display: flex; align-items: center; justify-content: center; align-self: stretch; width: 60px; margin-right: 25px; background: #2d2d2d; }
.file svg { width: 18px; height: 20px; }
.tools button { display: flex; justify-content: center; width: 50px; }
.tools svg { width: 20px; height: 20px; fill: none; stroke: #fff; stroke-width: 1.300px; }
.tools span { width: 46px; padding-left: 8px; }
.right { justify-content: flex-end; gap: 75px; }
.win { align-self: flex-start; height: 38px; }
.win button { display: flex; justify-content: center; width: 57px; }

.photo { position: relative; flex: 1; min-height: 0; overflow: hidden; background: #2c2c2c; }
.photo::after { content: ""; position: absolute; inset: 0; pointer-events: none; background: linear-gradient(rgba(0,0,0,.16), transparent 40px), linear-gradient(transparent 66%, rgba(0,0,0,.22)); }
.banner { display: flex; justify-content: flex-end; height: 45px; overflow: hidden; background: #36ccbc; border-bottom: 2px solid #146b63; }
.banner svg { flex: none; width: 90px; height: 90px; margin: -67px -27px 0 0; }
.sheet { position: relative; width: 67.24%; margin: 69px 16.67% 0 auto; background: #fff; color: #222; }
.watermark { position: absolute; left: 251px; top: 134px; width: 816px; height: 816px; }
.seal-top, .seal-bottom { font: bold italic 92px "Liberation Sans", sans-serif; fill: #f1f1f1; stroke: #f1f1f1; stroke-width: 5px; text-anchor: middle; }
.seal-bottom { font-size: 102px; }
table { position: relative; width: 100%; table-layout: fixed; border-collapse: collapse; font: 18px/22px "Liberation Sans", sans-serif; text-align: center; }
.c1 { width: 118px; } .c2 { width: 133px; } .c3 { width: 178px; } .c5 { width: 240px; } .c6 { width: 111px; }
th { height: 37px; padding: 0; border: 1px solid #b8e4da; background: #66c4b2; color: #e9faf6; font-weight: normal; }
thead tr:first-child th { border-top: 2px solid #d5d5d5; }
td { padding: 0; border: 1px solid #b9b9b9; }
tbody tr { height: 37px; }
.speaking tr { height: 59px; }
.speaking tr:nth-child(3n+1) { height: 58px; }
.reading tr:first-child, .reading tr:last-child { height: 39px; }
.listening tr:first-child { height: 58px; }
.listening tr:nth-child(3), .listening tr:nth-child(4) { height: 38px; }
.reading tr:first-child td, .listening tr:first-child td { border-top: 3px solid #1d1d1d; }
.speaking tr:first-child td { border-top: 1px solid #4f8f83; }
.listening .note { vertical-align: top; padding-top: 72px; }
small { font-size: 14px; }
.marker { position: absolute; left: 9.6%; top: 481px; width: 81%; height: 47px; border: 6px solid #e8716f; }

/* Stopwatch overlay */
.stopwatch { position: absolute; top: 104px; right: 89px; width: 361px; height: 280px; border: 1px solid #444; border-radius: 9px; background: #202020; box-shadow: 0 16px 40px rgba(0,0,0,.5); }
.pin { display: block; width: 20px; height: 20px; margin: 15px 0 0 14px; }
.digits { margin: 8px 0 0 37px; font-size: 56px; line-height: 72px; white-space: nowrap; }
.digits small { font-size: 40px; }
.units { display: flex; gap: 40px; margin: -8px 0 0 58px; font-size: 25px; line-height: 34px; }
.round { display: flex; gap: 28px; margin: 38px 0 0 43px; }
.round button { display: flex; align-items: center; justify-content: center; width: 71px; height: 71px; border: 2px solid #393939; border-radius: 50%; background: #2d2d2d; }
.round svg { width: 26px; height: 26px; }
.round .pause { border-color: #4cc2ff; background: #4cc2ff; }
```
